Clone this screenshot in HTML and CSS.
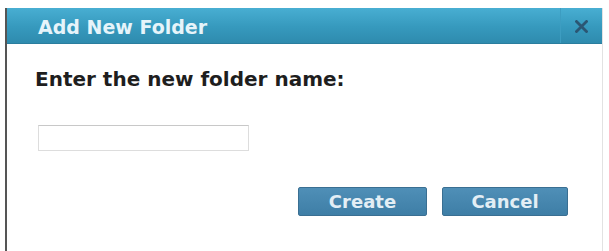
FILE: index.html
```html
<!DOCTYPE html>
<html>
<head>
<meta charset="utf-8">
<link rel="stylesheet" href="styles.css">
</head>
<body>
<div class="dialog">
  <div class="header">
    <span class="title">Add New Folder</span>
    <span class="close">
      <svg width="13" height="13" viewBox="0 0 13 13"><path d="M1.5 1.5L11.5 11.5M11.5 1.5L1.5 11.5" stroke="#2b5673" stroke-width="2.8" stroke-linecap="square"/></svg>
    </span>
  </div>
  <div class="content">
    <div class="label">Enter the new folder name:</div>
    <input class="name-input" type="text">
    <div class="actions">
      <button class="btn btn-create">Create</button>
      <button class="btn btn-cancel">Cancel</button>
    </div>
  </div>
</div>
</body>
</html>
```
FILE: styles.css
```css
html, body {
  margin: 0;
  padding: 0;
  background: #fff;
}
body {
  font-family: "DejaVu Sans", Verdana, sans-serif;
  padding: 8px 0 0 5px;
}
.dialog {
  width: 598px;
  height: 243px;
  box-sizing: border-box;
  border-left: 2px solid #555;
  border-right: 1px solid #e2e2e2;
  display: flex;
  flex-direction: column;
}
.header {
  height: 36px;
  background: linear-gradient(#48aed2, #3699bd 55%, #2e8bae);
  display: flex;
  align-items: center;
  justify-content: space-between;
  border-bottom: 1px solid #2a7d9e;
  box-sizing: border-box;
}
.title {
  margin-left: 31px;
  padding-top: 3px;
  color: #e6f4fa;
  font-weight: bold;
  font-size: 19px;
}
.close {
  width: 42px;
  height: 100%;
  display: flex;
  align-items: center;
  justify-content: center;
  padding-top: 2px;
  box-sizing: border-box;
  border-left: 1px solid #3d9dc1;
}
.content {
  padding: 23px 34px 0 28px;
  display: flex;
  flex-direction: column;
}
.label {
  font-size: 20px;
  font-weight: bold;
  color: #1e1e1e;
}
.name-input {
  margin: 34px 0 0 3px;
  width: 211px;
  height: 26px;
  box-sizing: border-box;
  border: 1px solid #ddd;
  border-top-color: #c8c8c8;
  outline: none;
}
.actions {
  margin-top: 36px;
  display: flex;
  justify-content: flex-end;
  gap: 15px;
}
.btn {
  height: 29px;
  border: 1px solid #3a6f92;
  border-radius: 2px;
  background: linear-gradient(#4f8fb7, #3e7ea6);
  color: #e3eef5;
  font-family: "DejaVu Sans", Verdana, sans-serif;
  font-weight: bold;
  font-size: 18px;
  padding: 0;
}
.btn-create {
  width: 129px;
}
.btn-cancel {
  width: 126px;
}
```
